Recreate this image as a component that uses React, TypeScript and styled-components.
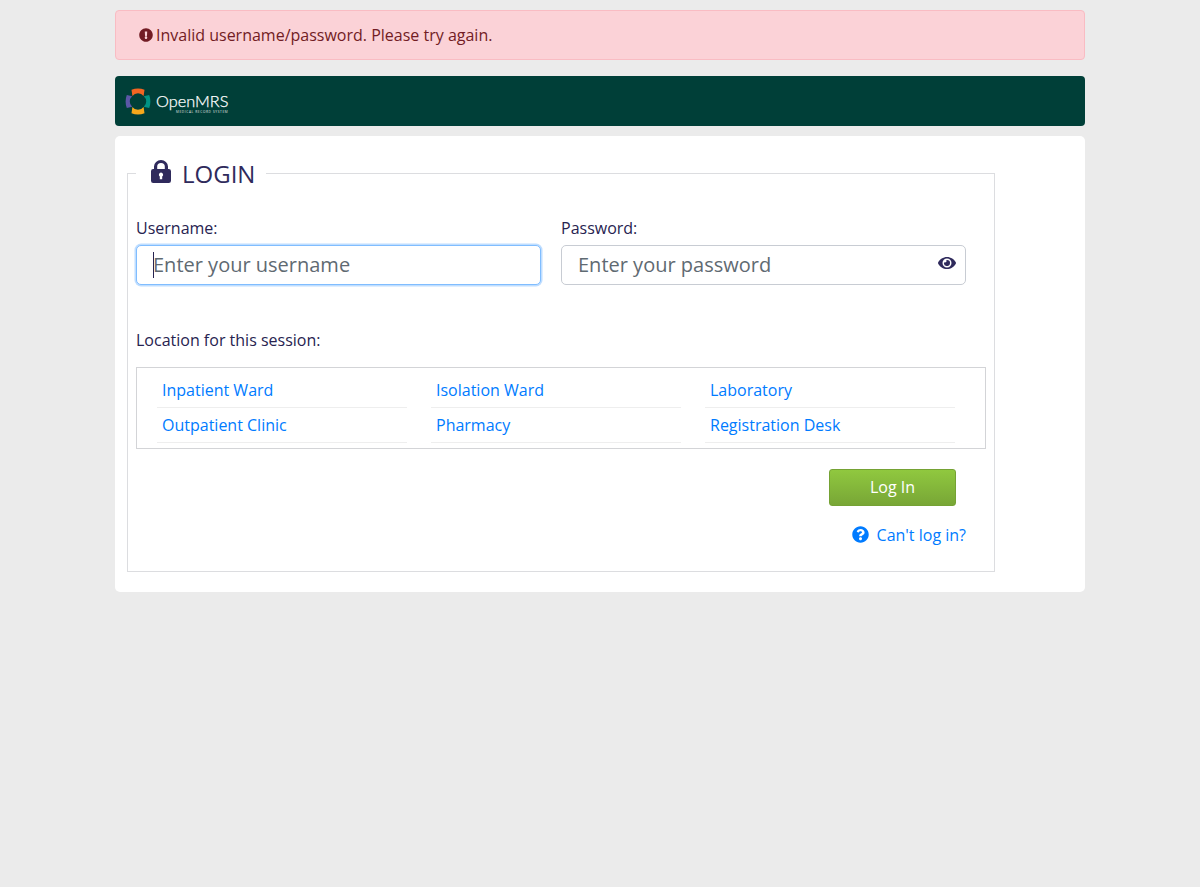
import React from "react";
import styled, { createGlobalStyle } from "styled-components";
import { FaExclamationCircle, FaEye, FaQuestionCircle } from "react-icons/fa";

const Global = createGlobalStyle`
  html, body { margin: 0; padding: 0; }
  body {
    background: #ebebeb;
    min-height: 887px;
    font-family: "Open Sans", "Liberation Sans", sans-serif;
    font-size: 16px;
    line-height: 24px;
    color: #272350;
  }
  * { box-sizing: border-box; }
`;

const Page = styled.div`
  width: 970px;
  margin: 0 auto;
  padding-top: 10px;
`;

const Alert = styled.div`
  height: 50px;
  display: flex;
  align-items: center;
  gap: 3px;
  padding: 0 23px;
  margin-bottom: 16px;
  background: #fbd2d7;
  border: 1px solid #f9bcc3;
  border-radius: 4px;
  color: #721c24;
  svg { width: 14px; height: 14px; flex: none; }
`;

const Header = styled.header`
  height: 50px;
  display: flex;
  align-items: center;
  gap: 5px;
  padding: 0 10px;
  margin-bottom: 10px;
  background: #003f38;
  border-radius: 4px;
`;

const LogoMark = styled.svg`
  width: 26px;
  height: 27px;
  flex: none;
`;

const LogoText = styled.div`
  display: flex;
  flex-direction: column;
  align-items: flex-end;
  color: #fff;
  padding-top: 4px;
`;

const LogoName = styled.span`
  font-family: Lato, "Open Sans", sans-serif;
  font-weight: 300;
  font-size: 16.3px;
  line-height: 16px;
  -webkit-text-stroke: 0.25px #fff;
`;

const LogoTag = styled.span`
  font-family: "Open Sans", sans-serif;
  font-size: 3.2px;
  line-height: 4px;
  letter-spacing: 0.62px;
  margin-top: 1px;
  opacity: 0.85;
`;

const Card = styled.main`
  height: 456px;
  padding: 19px 12px 0;
  background: #fff;
  border-radius: 5px;
`;

const Fieldset = styled.fieldset`
  width: 868px;
  height: 417px;
  margin: 0;
  padding: 0 8px;
  border: 1px solid #dcdde0;
  min-width: 0;
`;

const Legend = styled.legend`
  display: flex;
  align-items: center;
  gap: 11px;
  height: 36px;
  margin-left: 0;
  padding: 2px 11px 0 15px;
  font-size: 24px;
  line-height: 34px;
  color: #2f2a5c;
`;

const LockIcon = styled.svg`
  width: 20px;
  height: 23px;
  margin-top: -5px;
  flex: none;
`;

const Credentials = styled.div`
  display: flex;
  gap: 20px;
  margin-top: 25px;
`;

const Field = styled.div`
  width: 405px;
`;

const Label = styled.label`
  display: block;
  height: 29px;
  line-height: 24px;
`;

const InputWrap = styled.div`
  position: relative;
`;

const Input = styled.input`
  display: block;
  width: 100%;
  height: 40px;
  padding: 0 16px 2px;
  font-family: inherit;
  font-size: 20px;
  color: #495057;
  caret-color: transparent;
  background: #fff;
  border: 1px solid #c8ccd3;
  border-radius: 5px;
  outline: none;
  &::placeholder { color: #5f6a72; opacity: 1; }
  &:focus {
    border-color: #80bdff;
    box-shadow: 0 0 0 1.5px rgba(0, 123, 255, 0.25);
  }
`;

const Caret = styled.span`
  position: absolute;
  left: 17px;
  top: 7px;
  width: 1px;
  height: 26px;
  background: #272350;
  pointer-events: none;
`;

const EyeButton = styled.span`
  position: absolute;
  right: 10px;
  top: 9px;
  display: flex;
  color: #2f2a5c;
  svg { width: 18px; height: 18px; }
`;

const LocationLabel = styled.div`
  margin-top: 43px;
  height: 39px;
  line-height: 24px;
`;

const LocationBox = styled.ul`
  display: grid;
  grid-template-columns: repeat(3, 250px);
  column-gap: 24px;
  grid-auto-rows: 35px;
  align-content: start;
  width: 850px;
  height: 82px;
  margin: 0;
  padding: 5px 20px 0;
  list-style: none;
  border: 1px solid #d3d4d7;
`;

const LocationItem = styled.li`
  padding-left: 5px;
  height: 35px;
  line-height: 34px;
  border-bottom: 1px solid #eeeeee;
  color: #007bff;
`;

const Actions = styled.div`
  display: flex;
  justify-content: flex-end;
  width: 830px;
  margin-top: 20px;
  padding-right: 10px;
`;

const LoginButton = styled.button`
  width: 127px;
  height: 37px;
  padding: 0 0 1px;
  font-family: inherit;
  font-size: 16px;
  font-weight: 400;
  color: #fff;
  background: linear-gradient(to bottom, #90c83f, #78a636);
  border: 1px solid #75a234;
  border-radius: 3px;
`;

const HelpRow = styled.div`
  display: flex;
  justify-content: flex-end;
  align-items: center;
  gap: 8px;
  width: 830px;
  margin-top: 17px;
  color: #007bff;
  svg { width: 17px; height: 17px; margin-top: -2px; }
`;

const locations = [
  "Inpatient Ward",
  "Isolation Ward",
  "Laboratory",
  "Outpatient Clinic",
  "Pharmacy",
  "Registration Desk",
];

export default function App() {
  return (
    <Page>
      <Global />
      <Alert>
        <FaExclamationCircle />
        <span>Invalid username/password. Please try again.</span>
      </Alert>
      <Header>
        <LogoMark viewBox="0 0 26 27">
          <path d="M6.5 1.8 Q13 -0.6 19.5 1.8 L18.6 8 A7 7 0 0 0 7.4 8 Z" fill="#f26522" />
          <path d="M24.2 7 Q26.6 13.5 24.2 20 L18.8 18.8 A7 7 0 0 0 18.8 8.2 Z" fill="#009384" />
          <path d="M19.5 25.2 Q13 27.6 6.5 25.2 L7.4 19 A7 7 0 0 0 18.6 19 Z" fill="#f7a81b" />
          <path d="M1.8 20 Q-0.6 13.5 1.8 7 L7.2 8.2 A7 7 0 0 0 7.2 18.8 Z" fill="#5b57a6" />
        </LogoMark>
        <LogoText>
          <LogoName>OpenMRS</LogoName>
          <LogoTag>MEDICAL RECORD SYSTEM</LogoTag>
        </LogoText>
      </Header>
      <Card>
        <Fieldset>
          <Legend>
            <LockIcon viewBox="0 0 20 23">
              <path
                fillRule="evenodd"
                fill="currentColor"
                d="M3 9V6.5a7 6.5 0 0 1 14 0V9h.8A2.2 2.2 0 0 1 20 11.2v9.6a2.2 2.2 0 0 1-2.2 2.2H2.2A2.2 2.2 0 0 1 0 20.8v-9.6A2.2 2.2 0 0 1 2.2 9zm3.2 0h7.6V6.5a3.8 3.5 0 0 0-7.6 0zM10 12.6a2.2 2.2 0 0 0-1.2 4v2.6h2.4v-2.6a2.2 2.2 0 0 0-1.2-4z"
              />
            </LockIcon>
            <span>LOGIN</span>
          </Legend>
          <Credentials>
            <Field>
              <Label htmlFor="username">Username:</Label>
              <InputWrap>
                <Input id="username" placeholder="Enter your username" autoFocus />
                <Caret />
              </InputWrap>
            </Field>
            <Field>
              <Label htmlFor="password">Password:</Label>
              <InputWrap>
                <Input id="password" type="password" placeholder="Enter your password" />
                <EyeButton>
                  <FaEye />
                </EyeButton>
              </InputWrap>
            </Field>
          </Credentials>
          <LocationLabel>Location for this session:</LocationLabel>
          <LocationBox>
            {locations.map((l) => (
              <LocationItem key={l}>{l}</LocationItem>
            ))}
          </LocationBox>
          <Actions>
            <LoginButton>Log In</LoginButton>
          </Actions>
          <HelpRow>
            <FaQuestionCircle />
            <span>Can't log in?</span>
          </HelpRow>
        </Fieldset>
      </Card>
    </Page>
  );
}
